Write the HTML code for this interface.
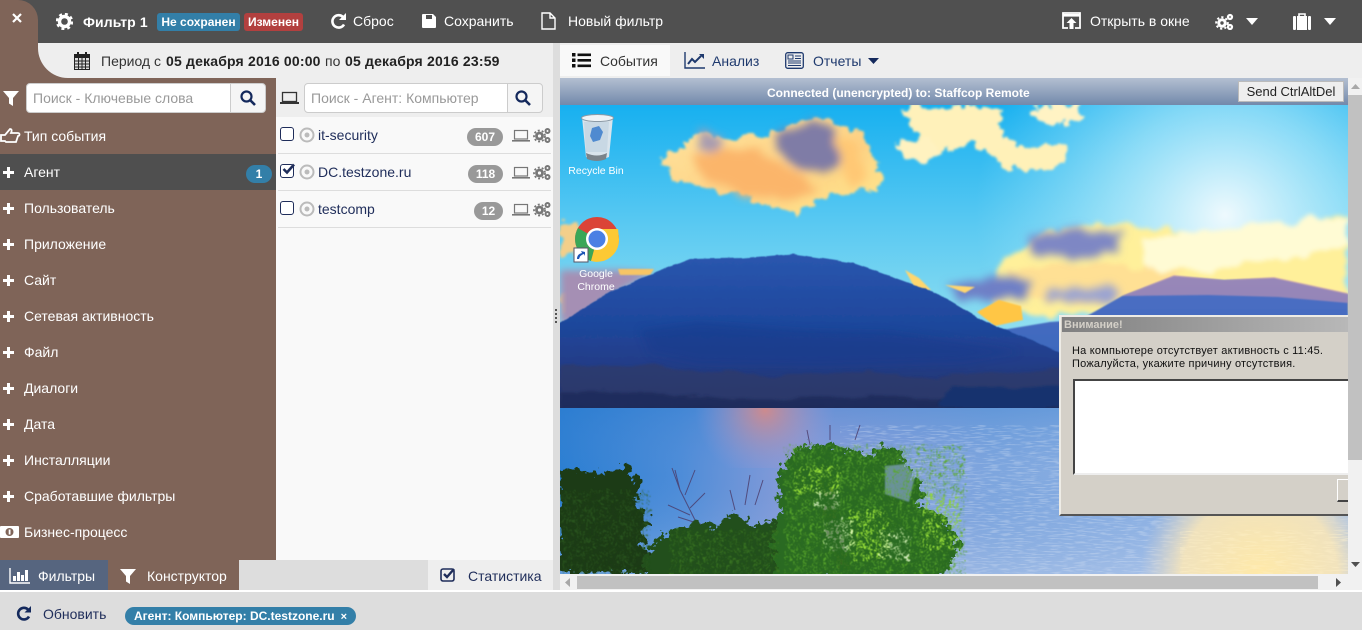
<!DOCTYPE html>
<html lang="ru"><head><meta charset="utf-8"><title>Фильтр</title>
<style>
*{box-sizing:border-box}
html,body{margin:0;padding:0;width:1362px;height:630px;overflow:hidden;background:#ddd;font-family:"Liberation Sans",sans-serif;font-size:14px}
.a{position:absolute}
.t{position:absolute;white-space:nowrap;line-height:18px}
.w{color:#fff}
.n{color:#1f2d5a}
.side{color:#fff;font-size:14px}
.plus{position:absolute;left:3px;width:11px;height:11px}
.plus:before{content:"";position:absolute;left:4px;top:0;width:2.500px;height:11px;background:#fff}
.plus:after{content:"";position:absolute;left:0;top:4px;width:11px;height:2.500px;background:#fff}
.input{position:absolute;background:#fff;border:1px solid #ccc;border-radius:4px;height:30px;color:#999;font-size:14px;line-height:28px;padding-left:6px;white-space:nowrap;overflow:hidden}
.btn{position:absolute;background:#f5f5f5;border:1px solid #ccc;border-radius:0 4px 4px 0;height:30px;width:36px}
.sep{position:absolute;left:278px;width:273px;height:1px;background:#ddd}
.badge{position:absolute;height:18px;border-radius:9px;background:#999;color:#fff;font-weight:bold;font-size:12px;line-height:18px;text-align:center}
.cb{position:absolute;left:280px;width:14px;height:14px;border:1.500px solid #1f2d5a;border-radius:3px;background:#fff}
</style></head><body>

<!-- top bar -->
<div class="a" style="left:0;top:0;width:1362px;height:43px;background:#505050"></div>
<div class="a" style="left:0;top:0;width:38px;height:78px;background:#7f6458;border-radius:0 20px 0 0"></div>
<div class="a" style="left:38px;top:43px;width:40px;height:35px;background:#7f6458"></div>
<div class="a" style="left:38px;top:43px;width:517px;height:35px;background:#eee;border-radius:0 0 0 30px"></div>
<svg class="a" style="left:12px;top:13px" width="10" height="10" viewBox="0 0 10 10"><path d="M1 1l8 8M9 1l-8 8" stroke="#fff" stroke-width="2.200"/></svg>

<svg class="a" style="left:56px;top:13px" width="17" height="17" viewBox="0 0 17 17"><circle cx="8.500" cy="8.500" r="5" fill="none" stroke="#fff" stroke-width="3.400"/><circle cx="8.500" cy="8.500" r="7.600" fill="none" stroke="#fff" stroke-width="2.200" stroke-dasharray="3 3"/></svg>
<div class="t w" style="left:83px;top:13px;font-weight:bold;font-size:14px;letter-spacing:.1px">Фильтр 1</div>
<div class="a w" style="left:157px;top:13px;width:83px;height:18px;background:#337fa8;border-radius:3px;font-weight:bold;font-size:12px;line-height:18px;text-align:center">Не сохранен</div>
<div class="a w" style="left:244px;top:13px;width:59px;height:18px;background:#b2403f;border-radius:3px;font-weight:bold;font-size:12px;line-height:18px;text-align:center">Изменен</div>

<svg class="a" style="left:330px;top:12px" width="17" height="18" viewBox="0 0 17 18"><path d="M14 12.500A6.200 6.200 0 1 1 13 5" fill="none" stroke="#fff" stroke-width="2.600"/><path d="M16 1v7h-7z" fill="#fff"/></svg>
<div class="t w" style="left:353px;top:12px">Сброс</div>
<svg class="a" style="left:422px;top:14px" width="14" height="14" viewBox="0 0 14 14"><path d="M1 0h10l3 3v10a1 1 0 0 1-1 1H1a1 1 0 0 1-1-1V1a1 1 0 0 1 1-1z" fill="#fff"/><rect x="4" y="1" width="6" height="4" fill="#505050"/></svg>
<div class="t w" style="left:444px;top:12px">Сохранить</div>
<svg class="a" style="left:541px;top:12px" width="15" height="18" viewBox="0 0 15 18"><path d="M1 1h8l5 5v11H1zM9 1v5h5" fill="none" stroke="#fff" stroke-width="1.400"/></svg>
<div class="t w" style="left:568px;top:12px">Новый фильтр</div>

<svg class="a" style="left:1062px;top:12px" width="19" height="18" viewBox="0 0 19 18"><path d="M6 16H1V1h17v15h-5" fill="none" stroke="#fff" stroke-width="1.800"/><rect x="1" y="2" width="17" height="2.600" fill="#fff"/><path d="M9.500 6l5 5h-3v6h-4v-6h-3z" fill="#fff"/></svg>
<div class="t w" style="left:1090px;top:12px">Открыть в окне</div>
<svg class="a" style="left:1215px;top:13px" width="19" height="17" viewBox="0 0 19 17"><circle cx="7" cy="10" r="3.200" fill="none" stroke="#fff" stroke-width="3"/><circle cx="7" cy="10" r="5.800" fill="none" stroke="#fff" stroke-width="2" stroke-dasharray="2.200 2.200"/><circle cx="15" cy="4" r="2" fill="none" stroke="#fff" stroke-width="2.200"/><circle cx="15" cy="14" r="2" fill="none" stroke="#fff" stroke-width="2.200"/></svg>
<svg class="a" style="left:1246px;top:18px" width="12" height="7"><path d="M0 0h12L6 7z" fill="#fff"/></svg>
<svg class="a" style="left:1293px;top:13px" width="18" height="17" viewBox="0 0 18 17"><path d="M6 3V1h6v2" fill="none" stroke="#fff" stroke-width="1.600"/><rect x="0" y="3" width="3" height="14" rx="1" fill="#fff"/><rect x="4" y="3" width="10" height="14" fill="#fff"/><rect x="15" y="3" width="3" height="14" rx="1" fill="#fff"/></svg>
<svg class="a" style="left:1324px;top:18px" width="12" height="7"><path d="M0 0h12L6 7z" fill="#fff"/></svg>

<!-- period -->
<svg class="a" style="left:74px;top:52px" width="16" height="18" viewBox="0 0 16 18"><rect x=".5" y="2.500" width="15" height="15" fill="#ddd" stroke="#222"/><rect x="1" y="3" width="14" height="3" fill="#222"/><path d="M1 9h14M1 12h14M1 15h14M4.500 6v11M8 6v11M11.500 6v11" stroke="#222" stroke-width="1"/><rect x="3" y="0" width="2" height="4" fill="#222"/><rect x="11" y="0" width="2" height="4" fill="#222"/></svg>
<div class="t" style="left:101px;top:52px;color:#333;font-size:14px">Период с</div>
<div class="t" style="left:166px;top:52px;color:#222;font-size:14px;font-weight:bold;letter-spacing:.18px">05 декабря 2016 00:00</div>
<div class="t" style="left:325px;top:52px;color:#333;font-size:14px">по</div>
<div class="t" style="left:345px;top:52px;color:#222;font-size:14px;font-weight:bold;letter-spacing:.18px">05 декабря 2016 23:59</div>

<!-- sidebar -->
<div class="a" style="left:0;top:78px;width:276px;height:482px;background:#7f6458"></div>
<div class="a" style="left:0;top:154px;width:276px;height:36px;background:#4f4f4f"></div>
<svg class="a" style="left:3px;top:91px" width="16" height="15" viewBox="0 0 16 15"><path d="M0 0h16L10 7v8L6 12.500V7z" fill="#fff"/></svg>
<div class="input" style="left:26px;top:83px;width:205px;border-radius:4px 0 0 4px">Поиск - Ключевые слова</div>
<div class="btn" style="left:230px;top:83px"></div>
<svg class="a" style="left:240px;top:90px" width="16" height="16" viewBox="0 0 16 16"><circle cx="6.500" cy="6.500" r="5" fill="none" stroke="#14295c" stroke-width="2.200"/><path d="M10 10l5 5" stroke="#14295c" stroke-width="2.600"/></svg>

<svg class="a" style="left:0;top:128px" width="21" height="16" viewBox="0 0 21 16"><path d="M1 7h4l5-6c2 0 2 2 1 4h7c2 0 2 3 0 3l-2 6H6l-1-1H1z" fill="none" stroke="#fff" stroke-width="1.800"/></svg>
<div class="t side" style="left:24px;top:127px">Тип события</div>
<div class="plus" style="top:167px"></div><div class="t side" style="left:24px;top:163px">Агент</div>
<div class="a w" style="left:246px;top:165px;width:26px;height:18px;background:#337fa8;border-radius:9px;text-align:center;font-weight:bold;font-size:12px;line-height:18px">1</div>
<div class="plus" style="top:203px"></div><div class="t side" style="left:24px;top:199px">Пользователь</div>
<div class="plus" style="top:239px"></div><div class="t side" style="left:24px;top:235px">Приложение</div>
<div class="plus" style="top:275px"></div><div class="t side" style="left:24px;top:271px">Сайт</div>
<div class="plus" style="top:311px"></div><div class="t side" style="left:24px;top:307px">Сетевая активность</div>
<div class="plus" style="top:347px"></div><div class="t side" style="left:24px;top:343px">Файл</div>
<div class="plus" style="top:383px"></div><div class="t side" style="left:24px;top:379px">Диалоги</div>
<div class="plus" style="top:419px"></div><div class="t side" style="left:24px;top:415px">Дата</div>
<div class="plus" style="top:455px"></div><div class="t side" style="left:24px;top:451px">Инсталляции</div>
<div class="plus" style="top:491px"></div><div class="t side" style="left:24px;top:487px">Сработавшие фильтры</div>
<svg class="a" style="left:0;top:525px" width="20" height="14" viewBox="0 0 20 14"><rect x="0" y="1" width="19" height="12" rx="1" fill="#fff"/><circle cx="9.500" cy="7" r="4" fill="#7f6458"/><rect x="8.700" y="4.500" width="1.800" height="5" fill="#fff"/></svg>
<div class="t side" style="left:24px;top:523px">Бизнес-процесс</div>

<!-- list column -->
<div class="a" style="left:276px;top:78px;width:277px;height:482px;background:#f9f9f9"></div>
<div class="a" style="left:276px;top:78px;width:277px;height:39px;background:#eee"></div>
<svg class="a" style="left:280px;top:91px" width="19" height="14" viewBox="0 0 19 14"><rect x="2.500" y="1.500" width="14" height="9" fill="none" stroke="#333" stroke-width="1.300"/><rect x="0" y="11" width="19" height="2" fill="#333"/></svg>
<div class="input" style="left:304px;top:83px;width:204px;border-radius:4px 0 0 4px">Поиск - Агент: Компьютер</div>
<div class="btn" style="left:507px;top:83px"></div>
<svg class="a" style="left:515px;top:90px" width="16" height="16" viewBox="0 0 16 16"><circle cx="6.500" cy="6.500" r="5" fill="none" stroke="#14295c" stroke-width="2.200"/><path d="M10 10l5 5" stroke="#14295c" stroke-width="2.600"/></svg>

<div class="sep" style="top:153px"></div>
<div class="sep" style="top:190px"></div>
<div class="sep" style="top:227px"></div>

<div class="cb" style="top:127px"></div>
<svg class="a" style="left:299px;top:127px" width="16" height="16"><circle cx="8" cy="8" r="6.500" fill="none" stroke="#bbb" stroke-width="2"/><circle cx="8" cy="8" r="2.500" fill="#bbb"/></svg>
<div class="t n" style="left:318px;top:126px">it-security</div>
<div class="badge" style="left:467px;top:128px;width:36px">607</div>

<div class="cb" style="top:164px"></div>
<svg class="a" style="left:281px;top:162px" width="14" height="14" viewBox="0 0 14 14"><path d="M2.500 7l3.500 3.500L13 2.500" fill="none" stroke="#1f2d5a" stroke-width="2.600"/></svg>
<svg class="a" style="left:299px;top:164px" width="16" height="16"><circle cx="8" cy="8" r="6.500" fill="none" stroke="#bbb" stroke-width="2"/><circle cx="8" cy="8" r="2.500" fill="#bbb"/></svg>
<div class="t n" style="left:318px;top:163px">DC.testzone.ru</div>
<div class="badge" style="left:468px;top:165px;width:35px">118</div>

<div class="cb" style="top:201px"></div>
<svg class="a" style="left:299px;top:201px" width="16" height="16"><circle cx="8" cy="8" r="6.500" fill="none" stroke="#bbb" stroke-width="2"/><circle cx="8" cy="8" r="2.500" fill="#bbb"/></svg>
<div class="t n" style="left:318px;top:200px">testcomp</div>
<div class="badge" style="left:474px;top:202px;width:29px">12</div>

<svg class="a" style="left:512px;top:129px" width="18" height="14" viewBox="0 0 18 14"><rect x="2.500" y="1.500" width="13" height="8.500" fill="none" stroke="#777" stroke-width="1.200"/><rect x="0" y="11" width="18" height="1.600" fill="#777"/></svg>
<svg class="a" style="left:512px;top:166px" width="18" height="14" viewBox="0 0 18 14"><rect x="2.500" y="1.500" width="13" height="8.500" fill="none" stroke="#777" stroke-width="1.200"/><rect x="0" y="11" width="18" height="1.600" fill="#777"/></svg>
<svg class="a" style="left:512px;top:203px" width="18" height="14" viewBox="0 0 18 14"><rect x="2.500" y="1.500" width="13" height="8.500" fill="none" stroke="#777" stroke-width="1.200"/><rect x="0" y="11" width="18" height="1.600" fill="#777"/></svg>
<svg class="a" style="left:533px;top:127px" width="18" height="16" viewBox="0 0 18 16"><circle cx="6.500" cy="9" r="3" fill="none" stroke="#777" stroke-width="2.800"/><circle cx="6.500" cy="9" r="5.500" fill="none" stroke="#777" stroke-width="1.800" stroke-dasharray="2 2"/><circle cx="14.500" cy="4" r="2" fill="none" stroke="#777" stroke-width="2"/><circle cx="14.500" cy="13" r="2" fill="none" stroke="#777" stroke-width="2"/></svg>
<svg class="a" style="left:533px;top:164px" width="18" height="16" viewBox="0 0 18 16"><circle cx="6.500" cy="9" r="3" fill="none" stroke="#777" stroke-width="2.800"/><circle cx="6.500" cy="9" r="5.500" fill="none" stroke="#777" stroke-width="1.800" stroke-dasharray="2 2"/><circle cx="14.500" cy="4" r="2" fill="none" stroke="#777" stroke-width="2"/><circle cx="14.500" cy="13" r="2" fill="none" stroke="#777" stroke-width="2"/></svg>
<svg class="a" style="left:533px;top:201px" width="18" height="16" viewBox="0 0 18 16"><circle cx="6.500" cy="9" r="3" fill="none" stroke="#777" stroke-width="2.800"/><circle cx="6.500" cy="9" r="5.500" fill="none" stroke="#777" stroke-width="1.800" stroke-dasharray="2 2"/><circle cx="14.500" cy="4" r="2" fill="none" stroke="#777" stroke-width="2"/><circle cx="14.500" cy="13" r="2" fill="none" stroke="#777" stroke-width="2"/></svg>

<!-- splitter -->
<div class="a" style="left:553px;top:43px;width:7px;height:548px;background:#ddd"></div>
<div class="a" style="left:555px;top:309px;width:2px;height:14px;background:repeating-linear-gradient(#555 0 2px,transparent 2px 4px)"></div>

<!-- bottom tabs -->
<div class="a" style="left:0;top:560px;width:553px;height:31px;background:#ddd"></div>
<div class="a" style="left:0;top:560px;width:108px;height:31px;background:#56657f"></div>
<div class="a" style="left:108px;top:560px;width:131px;height:31px;background:#7f6458"></div>
<div class="a" style="left:428px;top:560px;width:125px;height:31px;background:#eee"></div>
<svg class="a" style="left:9px;top:568px" width="21" height="16" viewBox="0 0 21 16"><path d="M1 0v15h20" fill="none" stroke="#fff" stroke-width="1.400"/><path d="M4 8h3v5H4zM8 4h3v9H8zM12 7h3v6h-3zM16 2h3v11h-3z" fill="#fff"/></svg>
<div class="t w" style="left:38px;top:567px">Фильтры</div>
<svg class="a" style="left:120px;top:569px" width="16" height="15" viewBox="0 0 16 15"><path d="M0 0h16L10 7v8L6 12.500V7z" fill="#fff"/></svg>
<div class="t w" style="left:147px;top:567px">Конструктор</div>
<svg class="a" style="left:440px;top:567px" width="17" height="16" viewBox="0 0 17 16"><rect x="1" y="2" width="13" height="12" rx="2" fill="none" stroke="#1f2d5a" stroke-width="1.600"/><path d="M4 7l3 3 7-8" fill="none" stroke="#1f2d5a" stroke-width="2.400"/></svg>
<div class="t n" style="left:468px;top:567px">Статистика</div>

<!-- footer -->
<div class="a" style="left:0;top:591px;width:1362px;height:39px;background:#ddd"></div>
<div class="a" style="left:0;top:590px;width:1362px;height:2px;background:#fff"></div>
<svg class="a" style="left:16px;top:605px" width="16" height="17" viewBox="0 0 16 17"><path d="M13 11.500A5.800 5.800 0 1 1 12 4.500" fill="none" stroke="#14295c" stroke-width="2.600"/><path d="M15 1v6.500H8.500z" fill="#14295c"/></svg>
<div class="t n" style="left:43px;top:605px">Обновить</div>
<div class="a w" style="left:125px;top:607px;width:231px;height:18px;background:#337fa8;border-radius:9px;font-weight:bold;font-size:12px;line-height:18px;padding-left:9px;white-space:nowrap">Агент: Компьютер: DC.testzone.ru<span style="margin-left:6px;font-size:11px">×</span></div>

<!-- right tabs -->
<div class="a" style="left:560px;top:43px;width:802px;height:35px;background:#eee"></div>
<div class="a" style="left:560px;top:45px;width:110px;height:31px;background:#f9f9f9"></div>
<svg class="a" style="left:572px;top:53px" width="19" height="15" viewBox="0 0 19 15"><path d="M0 0h3.500v3.500H0zM0 5.500h3.500V9H0zM0 11h3.500v3.500H0zM5.500 .5H19v2.600H5.500zM5.500 6H19v2.600H5.500zM5.500 11.500H19v2.600H5.500z" fill="#111"/></svg>
<div class="t" style="left:600px;top:52px;color:#333">События</div>
<svg class="a" style="left:684px;top:52px" width="21" height="17" viewBox="0 0 21 17"><path d="M1 0v16h20" fill="none" stroke="#1f3a6e" stroke-width="1.400"/><path d="M4 12l4-5 3 3 6-6" fill="none" stroke="#1f3a6e" stroke-width="2"/><path d="M15 2h5v5z" fill="#1f3a6e"/></svg>
<div class="t" style="left:712px;top:52px;color:#1f3a6e">Анализ</div>
<svg class="a" style="left:785px;top:52px" width="19" height="17" viewBox="0 0 19 17"><rect x=".7" y=".7" width="17.600" height="15.600" rx="2" fill="none" stroke="#1f3a6e" stroke-width="1.300"/><rect x="3" y="3" width="5" height="4" fill="none" stroke="#1f3a6e"/><path d="M10 4h6M10 6.500h6M3 9h13M3 11h13M3 13.500h13" stroke="#1f3a6e"/></svg>
<div class="t" style="left:813px;top:52px;color:#1f3a6e">Отчеты</div>
<svg class="a" style="left:868px;top:58px" width="11" height="6"><path d="M0 0h11L5.500 6z" fill="#14295c"/></svg>

<!-- remote header -->
<div class="a" style="left:560px;top:78px;width:788px;height:27px;background:linear-gradient(#b3bfd1,#7289ab)"></div>
<div class="t w" style="left:767px;top:84px;font-weight:bold;font-size:12px">Connected (unencrypted) to: Staffcop Remote</div>
<div class="a" style="left:1238px;top:81px;width:106px;height:21px;background:#eee;border:1px solid #bbb;color:#222;font-size:13px;line-height:19px;text-align:center;white-space:nowrap">Send CtrlAltDel</div>

<!-- desktop -->
<svg class="a" style="left:560px;top:105px" width="788" height="469" viewBox="560 105 788 469">
<defs>
<linearGradient id="sky" x1="0" y1="0" x2="0" y2="1"><stop offset="0" stop-color="#17b0f0"/><stop offset=".4" stop-color="#5ccaf2"/><stop offset=".7" stop-color="#8adcf0"/><stop offset="1" stop-color="#b5e8ec"/></linearGradient>
<radialGradient id="sun" cx="1225" cy="215" r="250" gradientUnits="userSpaceOnUse"><stop offset="0" stop-color="#fff" stop-opacity=".9"/><stop offset=".45" stop-color="#c8f2fb" stop-opacity=".6"/><stop offset="1" stop-color="#a8e8f8" stop-opacity="0"/></radialGradient>
<linearGradient id="lake" x1="0" y1="0" x2="1" y2="0"><stop offset="0" stop-color="#2a7ed2"/><stop offset=".15" stop-color="#4c8cd8"/><stop offset=".3" stop-color="#8a9cd8"/><stop offset=".55" stop-color="#7ea6de"/><stop offset="1" stop-color="#a4c2ea"/></linearGradient>
<linearGradient id="lakev" x1="0" y1="0" x2="0" y2="1"><stop offset="0" stop-color="#2f7ccf" stop-opacity=".35"/><stop offset=".4" stop-color="#5d90d8" stop-opacity="0"/><stop offset="1" stop-color="#cdd8ee" stop-opacity=".35"/></linearGradient>
<linearGradient id="mtn" gradientUnits="userSpaceOnUse" x1="0" y1="255" x2="0" y2="410"><stop offset="0" stop-color="#2a56ae"/><stop offset=".45" stop-color="#1e479c"/><stop offset=".7" stop-color="#233d88"/><stop offset="1" stop-color="#25305f"/></linearGradient>
<linearGradient id="mtn2" x1="0" y1="0" x2="0" y2="1"><stop offset="0" stop-color="#4f6fc4"/><stop offset="1" stop-color="#2a62b6"/></linearGradient>
<linearGradient id="cg" x1="0" y1="0" x2="1" y2="1"><stop offset="0" stop-color="#ffe6a0"/><stop offset=".6" stop-color="#fdd184"/><stop offset="1" stop-color="#ffea8e"/></linearGradient>
<radialGradient id="gold" cx="1260" cy="575" r="120" gradientUnits="userSpaceOnUse"><stop offset="0" stop-color="#ffe9a8"/><stop offset=".65" stop-color="#f9e6b8" stop-opacity=".9"/><stop offset="1" stop-color="#e8dccc" stop-opacity="0"/></radialGradient>
<radialGradient id="pink" cx="765" cy="410" r="70" gradientUnits="userSpaceOnUse"><stop offset="0" stop-color="#d98a86" stop-opacity=".9"/><stop offset="1" stop-color="#9d9ad8" stop-opacity="0"/></radialGradient>
<filter id="cl" filterUnits="userSpaceOnUse" x="540" y="90" width="830" height="300"><feTurbulence type="fractalNoise" baseFrequency=".09" numOctaves="3" seed="4"/><feDisplacementMap in="SourceGraphic" scale="16" xChannelSelector="R" yChannelSelector="G"/><feGaussianBlur stdDeviation="1.400"/></filter>
<filter id="cls" filterUnits="userSpaceOnUse" x="540" y="90" width="830" height="300"><feTurbulence type="fractalNoise" baseFrequency=".06" numOctaves="2" seed="11"/><feDisplacementMap in="SourceGraphic" scale="14" xChannelSelector="R" yChannelSelector="G"/><feGaussianBlur stdDeviation="4.500"/></filter>
<filter id="clb" filterUnits="userSpaceOnUse" x="540" y="90" width="830" height="300"><feTurbulence type="fractalNoise" baseFrequency=".05" numOctaves="3" seed="9"/><feDisplacementMap in="SourceGraphic" scale="18" xChannelSelector="R" yChannelSelector="G"/><feGaussianBlur stdDeviation="2.500"/></filter>
<filter id="leaf" filterUnits="userSpaceOnUse" x="540" y="420" width="450" height="170"><feTurbulence type="fractalNoise" baseFrequency=".14" numOctaves="3" seed="7"/><feDisplacementMap in="SourceGraphic" scale="22" xChannelSelector="R" yChannelSelector="G"/></filter>
<filter id="speck" filterUnits="userSpaceOnUse" x="540" y="420" width="450" height="170"><feTurbulence type="fractalNoise" baseFrequency=".3" numOctaves="2" seed="3" result="n"/><feColorMatrix in="n" type="matrix" values="0 0 0 0 0 0 0 0 0 0 0 0 0 0 0 8 0 0 0 -4.300" result="m"/><feComposite in="SourceGraphic" in2="m" operator="in" result="s"/><feDisplacementMap in="s" in2="n" scale="10" xChannelSelector="R" yChannelSelector="G"/><feGaussianBlur stdDeviation=".4"/></filter>
<filter id="water" filterUnits="userSpaceOnUse" x="560" y="400" width="790" height="180"><feTurbulence type="fractalNoise" baseFrequency=".08 .7" numOctaves="2" seed="5" result="n"/><feColorMatrix in="n" type="matrix" values="0 0 0 0 0 0 0 0 0 0 0 0 0 0 0 5 0 0 0 -2.500" result="m"/><feComposite in="SourceGraphic" in2="m" operator="in"/></filter>
<filter id="ridge" filterUnits="userSpaceOnUse" x="540" y="240" width="540" height="180"><feTurbulence type="fractalNoise" baseFrequency=".08" numOctaves="2" seed="2"/><feDisplacementMap in="SourceGraphic" scale="3" xChannelSelector="R" yChannelSelector="G"/><feGaussianBlur stdDeviation=".5"/></filter>
<filter id="land" filterUnits="userSpaceOnUse" x="540" y="300" width="540" height="120"><feTurbulence type="fractalNoise" baseFrequency=".025 .14" numOctaves="3" seed="2"/><feDisplacementMap in="SourceGraphic" scale="10" xChannelSelector="R" yChannelSelector="G"/><feGaussianBlur stdDeviation="1"/></filter>
<filter id="b1"><feGaussianBlur stdDeviation=".8"/></filter>
<filter id="b4" filterUnits="userSpaceOnUse" x="540" y="90" width="830" height="500"><feGaussianBlur stdDeviation="4"/></filter>
<filter id="b8" filterUnits="userSpaceOnUse" x="540" y="90" width="830" height="500"><feGaussianBlur stdDeviation="9"/></filter>
</defs>
<rect x="560" y="105" width="788" height="310" fill="url(#sky)"/>
<rect x="560" y="105" width="788" height="310" fill="url(#sun)"/>

<!-- clouds upper left -->
<g filter="url(#cl)">
<path d="M660 160l24-14 14-13 30 6 42-6 46-18 46 18 14 28 6 26-36 5-30 8-18 14-24-8-35-10-30-8-30-6-14-18z" fill="url(#cg)"/>
<path d="M903 108h100l-3 22 16 18-22 6-24-10-24 6-22 -6-12-16z" fill="#fff1ba"/>
<path d="M898 140l32-2 12 14-14 10-22-2z" fill="#fff2c0"/>
<path d="M990 152l50-8 26 2-2 18-26 8-30-4z" fill="#fff1b8"/>
<path d="M1032 109l46-4 4 14-24 6-20-4z" fill="#fff3c4"/>
<path d="M560 296l14-2 8 8-12 12-10-2z" fill="#ffe88a"/>
<path d="M560 224l18-2 4 30-22 4z" fill="#f3cf8a"/>
</g>
<g filter="url(#cls)">
<path d="M690 155l60-8 30 15 36 28-30 10-50-6-30-15z" fill="#fbb56a"/>
<path d="M770 134l46-14 20 10 4 32-14 14-30-8-18-18z" fill="#7f7ca6"/>
<path d="M700 130l25 10-8 12-22-4z" fill="#a79bb0"/>
<path d="M836 135l20 8 10 38-16 6-10-26z" fill="#ffc874"/>
</g>
<!-- left horizon clouds -->
<path d="M560 270h60l35 2-40 22-40 30h-15z" fill="#a58fb4" filter="url(#b4)"/>
<path d="M618 269h36l-4 6h-30z" fill="#f7c565" filter="url(#b1)"/>

<!-- clouds right -->
<g filter="url(#clb)">
<path d="M990 285l16-26 44-30 60-6 80 10 80-6 78-12v100H1000z" fill="#fff09a"/>
<path d="M1140 240l100-16 108-6v30l-120 20-80 0z" fill="#fffbd4"/>
<path d="M1010 270l40-6 60 0 70 6-30 26-70 8-60-8z" fill="#ffe094"/>
</g>
<g filter="url(#cls)">
<path d="M1028 236l50-8 45 5-5 20-50 6-38-6z" fill="#7e87c4"/>
<path d="M945 285l60-8 28 4-8 18-70 2z" fill="#6e7fc6"/>
<path d="M1045 288h70v14h-70z" fill="#9aa3d2"/>
</g>
<path d="M905 270l14 8 12 12-14 2zM945 285l30 2-10 6z" fill="#ffd66e" filter="url(#b1)"/>
<path d="M977 312l22-12 22 6 2 14-28 6z" fill="#ffc644" filter="url(#b1)"/>

<!-- distant mountain -->
<path d="M1002 330l48-8 30-2 42-24 52-20 50 4 50-2 74 16v140H1002z" fill="url(#mtn2)" filter="url(#b1)"/>
<path d="M1122 296l52-21 50 5 50-3 74 16v10l-70-6-70-2z" fill="#d49ab0" opacity=".55" filter="url(#b1)"/>
<path d="M1002 370h346v40H1002z" fill="#284a90"/>

<!-- main mountain -->
<path d="M556 325L610 292 657 272 690 259 743 258 793 254 853 263 893 277 937 293 977 317 997 327 1033 340 1062 354V410H556z" fill="url(#mtn)" filter="url(#ridge)"/>
<path d="M640 330l60-8 100 8 90 2 70 10 60 10-60 10-140 4-120-2-50-10z" fill="#173a8c" opacity=".5" filter="url(#b4)"/>
<path d="M560 366h90l50 4 80 6 90-4 60 6 130-8v36H560z" fill="#2f3a6c" opacity=".8" filter="url(#land)"/>
<path d="M560 392h90l40 4 90 4 40-4 60 0 60 4 120-2v12H560z" fill="#1f2a5a" opacity=".8" filter="url(#land)"/>
<path d="M950 388h110v20H940z" fill="#17306e" filter="url(#land)"/>

<!-- lake -->
<rect x="560" y="408" width="788" height="166" fill="url(#lake)"/>
<rect x="560" y="408" width="788" height="166" fill="url(#lakev)"/>
<rect x="660" y="408" width="220" height="60" fill="url(#pink)"/>
<rect x="840" y="425" width="508" height="149" fill="#e6edf8" opacity=".28" filter="url(#water)"/>
<rect x="1120" y="500" width="228" height="74" fill="url(#gold)"/>
<rect x="1180" y="530" width="168" height="44" fill="#fff3cc" opacity=".35" filter="url(#water)"/>

<!-- branches -->
<g stroke="#4a3a68" stroke-width="1" fill="none" opacity=".8"><path d="M700 530l-20-40-8-22M680 490l-5-20M685 495l10-25M690 508l15-15M690 515l-22-10M703 525l-25-8M735 510l-5-20M745 505l5-30M755 505l8-25"/><path d="M810 445l-3-15M830 440l0-15M855 440l5-15"/></g>

<!-- trees -->
<g filter="url(#leaf)">
<path d="M558 466l18 2 20 6 18-3 12-8 14 18-6 20 14 14-6 22 10 36H558z" fill="#1b3a14"/>
<path d="M640 580l6-30 20-16 26-12 25 4 15-14 22 14 20-6 16 18 10 42z" fill="#24501a"/>
<path d="M775 580l-3-40 8-35-3-30 15-22 15-8 25 0 25 6 10 6 18-12 12 2 12 25 14 20-6 14 24 8 18 22-4 18-8 20-10 6z" fill="#2c6a20"/>
</g>
<path d="M885 466l20-2 10 12-6 26-24 -8z" fill="#86a4cc" opacity=".7" filter="url(#b1)"/>
<rect x="785" y="445" width="180" height="130" fill="#5aa82a" opacity=".9" filter="url(#speck)"/>
<path d="M795 465h45v30h-45zM920 495h40v55h-40zM850 510h40v50h-40z" fill="#a4e83a" opacity=".9" filter="url(#speck)"/>
<path d="M815 490h25v20h-25zM825 520h30v30h-30zM880 530h30v30h-30z" fill="#eef8e0" opacity=".8" filter="url(#speck)"/>
<path d="M560 490h90v85h-90z" fill="#2f6020" opacity=".7" filter="url(#speck)"/>
<path d="M670 530h110v45H670z" fill="#3c7a22" opacity=".85" filter="url(#speck)"/>
<path d="M820 480l12 0 6 40 14 50-12 0-14-40z" fill="#123014" opacity=".55" filter="url(#speck)"/>

<!-- desktop icons -->
<g>
<path d="M582 117h31l-4 40q-12 5-23 0z" fill="#d9e4ec"/>
<ellipse cx="597.500" cy="118" rx="16" ry="3.500" fill="#eef3f6" stroke="#8c9aa6"/>
<path d="M584 122l25 0-2 30-21 0z" fill="#c8d8e4"/>
<path d="M592 128l7-2 4 6-3 8-7 2-3-6z" fill="#4f8ad0"/>
<path d="M586 153q11 5 21 0l-1 6q-9 4-19 0z" fill="#7a838a"/>
<text x="596" y="174" text-anchor="middle" font-family="Liberation Sans, sans-serif" font-size="10.500" fill="#fff">Recycle Bin</text>
<circle cx="597" cy="239" r="22" fill="#db4437"/>
<path d="M597 239l-19 11a22 22 0 0 1 0-22z" fill="#3aa757"/>
<path d="M578 250a22 22 0 0 0 13 11l6-22z" fill="#3aa757"/>
<path d="M597 239h22a22 22 0 0 1-28 22z" fill="#fcc934"/>
<path d="M597 229h21l1 10-22 0z" fill="#fcc934"/>
<circle cx="597" cy="239" r="11" fill="#fff"/>
<circle cx="597" cy="239" r="8.500" fill="#4a80e4"/>
<rect x="574" y="248" width="14" height="14" fill="#fff" stroke="#556"/>
<path d="M577 259q0-5 5-6l-1-2 4 1 0 4-1-2q-4 1-5 5z" fill="#1c54b4"/>
<text x="596" y="277" text-anchor="middle" font-family="Liberation Sans, sans-serif" font-size="10.500" fill="#fff">Google</text>
<text x="596" y="290" text-anchor="middle" font-family="Liberation Sans, sans-serif" font-size="10.500" fill="#fff">Chrome</text>
</g>
</svg>

<!-- dialog -->
<div class="a" style="left:1059px;top:315px;width:289px;height:201px;background:#d4d0c8;border-top:2px solid #eeece6;border-left:2px solid #eeece6;border-bottom:2px solid #555"></div>
<div class="a" style="left:1062px;top:317px;width:286px;height:15px;background:linear-gradient(90deg,#808080,#b8b8b8);color:#d4d0c8;font-weight:bold;font-size:11px;line-height:16px;padding-left:2px">Внимание!</div>
<div class="t" style="left:1072px;top:345px;font-size:11px;line-height:13px;color:#111;letter-spacing:.21px">На компьютере отсутствует активность с 11:45.<br>Пожалуйста, укажите причину отсутствия.</div>
<div class="a" style="left:1073px;top:379px;width:275px;height:96px;background:#fff;border-top:2px solid #444;border-left:2px solid #444;border-bottom:2px solid #eee"></div>
<div class="a" style="left:1337px;top:479px;width:11px;height:23px;background:#d4d0c8;border-top:1px solid #fff;border-left:1px solid #fff;border-bottom:2px solid #444"></div>

<!-- scrollbars -->
<div class="a" style="left:1348px;top:78px;width:14px;height:497px;background:#f1f1f1"></div>
<div class="a" style="left:1348px;top:95px;width:14px;height:365px;background:#c1c1c1"></div>
<svg class="a" style="left:1351px;top:84px" width="9" height="6"><path d="M4.500 0L9 5H0z" fill="#a8a8a8"/></svg>
<svg class="a" style="left:1351px;top:562px" width="9" height="6"><path d="M0 0h9L4.500 5z" fill="#505050"/></svg>
<div class="a" style="left:560px;top:574px;width:802px;height:16px;background:#f1f1f1"></div>
<div class="a" style="left:577px;top:576px;width:741px;height:13px;background:#c1c1c1"></div>
<svg class="a" style="left:565px;top:578px" width="6" height="9"><path d="M5 0v9L0 4.500z" fill="#a8a8a8"/></svg>
<svg class="a" style="left:1336px;top:578px" width="6" height="9"><path d="M0 0v9l5-4.500z" fill="#505050"/></svg>
</body></html>
